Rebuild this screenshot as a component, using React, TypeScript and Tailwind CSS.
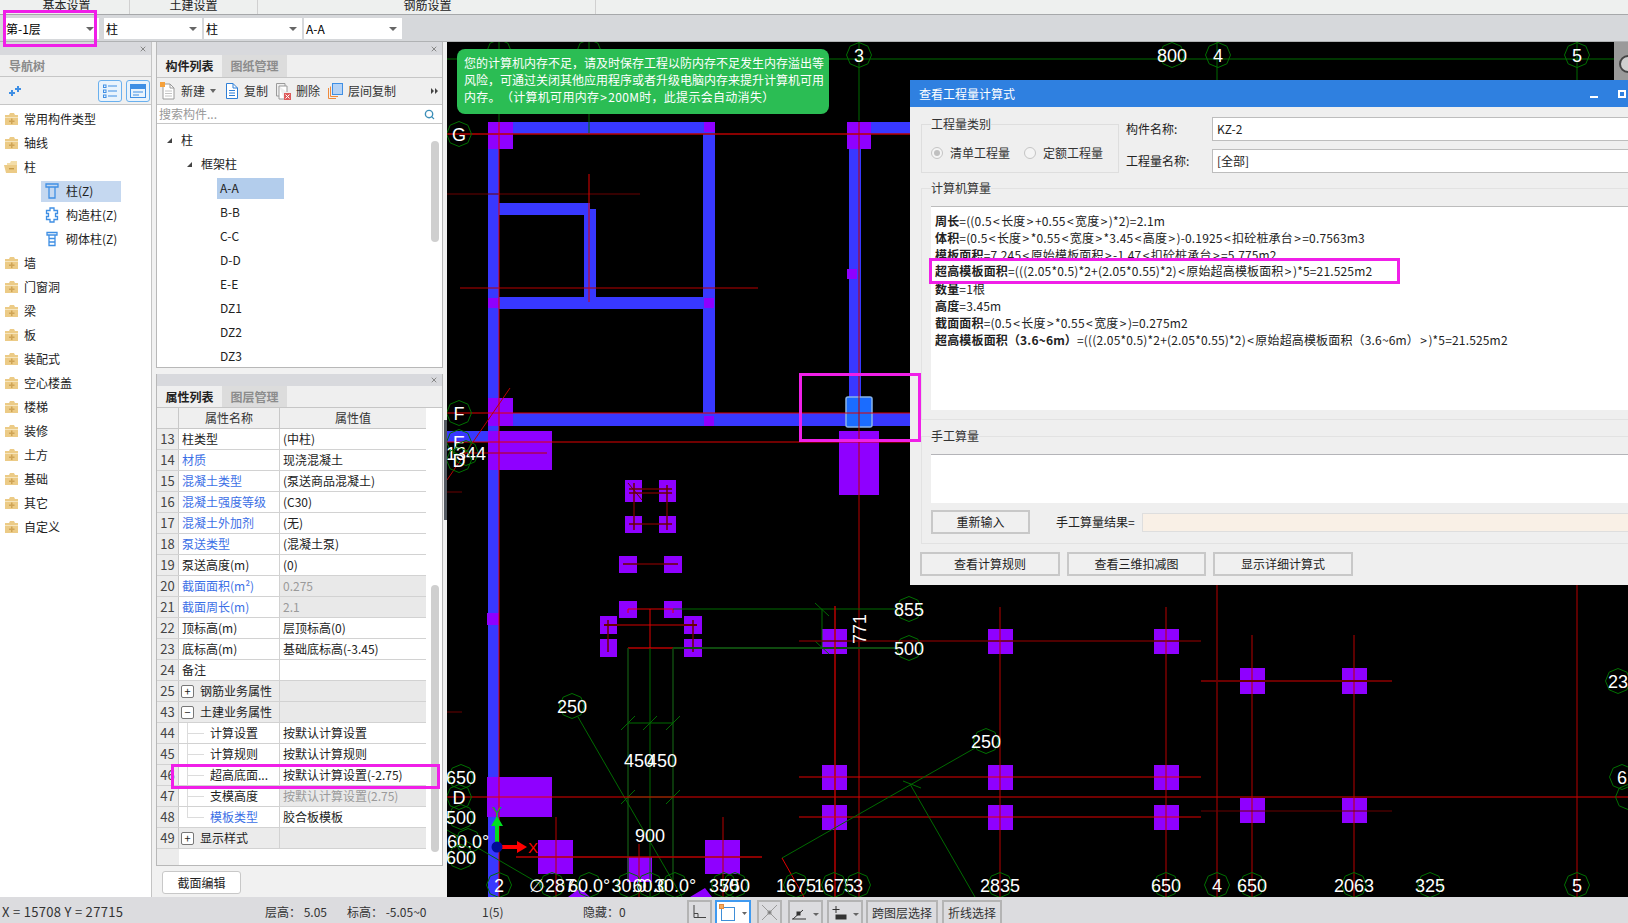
import React from "react";
import { Search, X as CloseIcon } from "lucide-react";

const MAGENTA = "border-[3px] border-[#f01fe8]";

// ---------- small icons ----------
const FolderIcon = ({ open }: { open?: boolean }) => (
  <svg width="15" height="14" viewBox="0 0 15 14" className="shrink-0">
    {open ? (
      <>
        <path d="M3 3 L6 3 L7 1 L13 1 L13 11 L3 11 Z" fill="#f3dda8" />
        <path d="M0 5 L13 5 L13 13 L2 13 Z" fill="#eccb86" />
        <rect x="5" y="8" width="5" height="1.4" fill="#c79a45" />
      </>
    ) : (
      <>
        <path d="M1 3 L5 3 L6 1 L10 1 L11 3 L14 3 L14 13 L1 13 Z" fill="#eccb86" />
        <path d="M1 5 L14 5 L14 6 L1 6 Z" fill="#f6e5bd" />
        <path d="M7 6.5 H8.5 V8.5 H10.5 V10 H8.5 V12 H7 V10 H5 V8.5 H7 Z" fill="#cfa455" />
      </>
    )}
  </svg>
);

const ColumnIcon = () => (
  <svg width="14" height="16" viewBox="0 0 14 16" fill="none" stroke="#3f8fe4" strokeWidth="1.3">
    <path d="M1 1 H13 V4 H1 Z M4 4 V15 H10 V4" />
  </svg>
);
const ConstructColIcon = () => (
  <svg width="14" height="16" viewBox="0 0 14 16" fill="none" stroke="#3f8fe4" strokeWidth="1.3">
    <path d="M5 1 H9 V3.5 H12.5 V6.5 H10.5 V9.5 H12.5 V12.5 H9 V15 H5 V12.5 H1.5 V9.5 H3.5 V6.5 H1.5 V3.5 H5 Z" />
  </svg>
);
const BrickColIcon = () => (
  <svg width="14" height="16" viewBox="0 0 14 16" fill="none" stroke="#3f8fe4" strokeWidth="1.3">
    <path d="M2 1.5 H12 V4 H2 Z M4 4 V14.5 H10 V4 M4 7.5 H10 M4 11 H10" />
  </svg>
);

const NewIcon = () => (
  <svg width="16" height="18" viewBox="0 0 16 18" fill="none">
    <path d="M3 2 H10 L14 6 V17 H3 Z" fill="#fff" stroke="#9a9a9a" />
    <path d="M10 2 V6 H14" stroke="#9a9a9a" />
    <path d="M5 9 H12 M5 11.5 H12 M5 14 H12" stroke="#c4c4c4" />
    <rect x="0" y="0" width="5" height="5" fill="#f5a13c" />
  </svg>
);
const CopyIcon = () => (
  <svg width="14" height="18" viewBox="0 0 14 18" fill="none" stroke="#2f7fd6">
    <path d="M1.5 1.5 H8 L12.5 6 V16.5 H1.5 Z" fill="#fff" />
    <path d="M8 1.5 V6 H12.5 M4 8.5 H10 M4 11 H10 M4 13.5 H10" />
  </svg>
);
const DeleteIcon = () => (
  <svg width="15" height="17" viewBox="0 0 15 17" fill="none">
    <path d="M0.5 0.5 H9 V3 M0.5 0.5 V13 H3" stroke="#9a9a9a" />
    <path d="M3 3 H11 V9 M3 3 V16 H8" stroke="#9a9a9a" fill="#fff" />
    <rect x="8" y="10" width="7" height="7" fill="#de5a5a" />
    <path d="M9.5 11.5 L13.5 15.5 M13.5 11.5 L9.5 15.5" stroke="#fff" />
  </svg>
);
const FloorCopyIcon = () => (
  <svg width="15" height="16" viewBox="0 0 15 16" fill="none">
    <path d="M0.5 5 V15.5 H8 M2.5 3.500 V13.500 H10" stroke="#ee8a3c" />
    <rect x="4.5" y="0.5" width="10" height="11" fill="#b6d3f5" stroke="#3f8fe4" />
  </svg>
);

// ---------- top ----------
const Select = ({ label, w }: { label: string; w: string }) => (
  <div className={`${w} h-[21px] bg-white flex items-center justify-between pl-[2px] pr-[5px] text-[12px]`}>
    <span>{label}</span>
    <span className="w-0 h-0 border-x-[4px] border-x-transparent border-t-[4px] border-t-[#666]" />
  </div>
);

const MenuBar = () => (
  <div className="h-[15px] bg-[#eef0ef] border-b border-[#a6a8aa] flex text-[12px] leading-[14px] text-[#222] overflow-hidden shrink-0">
    <div className="w-[130px] border-r border-[#d0d0d0] text-center pl-[4px] -mt-[2px]">基本设置</div>
    <div className="w-[128px] border-r border-[#d0d0d0] text-center -mt-[2px]">土建设置</div>
    <div className="w-[338px] border-r border-[#d0d0d0] text-center pl-[2px] -mt-[2px]">钢筋设置</div>
  </div>
);

const FloorBar = () => (
  <div className="h-[27px] bg-[#d6d8db] border-b border-[#b0b2b4] flex items-center pl-[4px] pt-[1px] gap-[2px] shrink-0 relative">
    <Select label="第-1层" w="w-[95px]" />
    <div className="w-[1px]" />
    <Select label="柱" w="w-[98px]" />
    <Select label="柱" w="w-[98px]" />
    <Select label="A-A" w="w-[98px]" />
    <div className={`absolute left-[3px] top-[-5px] w-[94px] h-[37px] ${MAGENTA}`} />
  </div>
);

const PanelBar = ({ h = "h-[12px]" }: { h?: string }) => (
  <div className={`${h} bg-[#d8d9dd] flex items-center justify-end pr-[4px] shrink-0`}>
    <CloseIcon size={8} strokeWidth={3} color="#888" />
  </div>
);

// ---------- navigation ----------
const navItems: { label: string; kind?: "open" | "child"; icon?: React.ReactNode; active?: boolean }[] = [
  { label: "常用构件类型" },
  { label: "轴线" },
  { label: "柱", kind: "open" },
  { label: "柱(Z)", kind: "child", icon: <ColumnIcon />, active: true },
  { label: "构造柱(Z)", kind: "child", icon: <ConstructColIcon /> },
  { label: "砌体柱(Z)", kind: "child", icon: <BrickColIcon /> },
  { label: "墙" },
  { label: "门窗洞" },
  { label: "梁" },
  { label: "板" },
  { label: "装配式" },
  { label: "空心楼盖" },
  { label: "楼梯" },
  { label: "装修" },
  { label: "土方" },
  { label: "基础" },
  { label: "其它" },
  { label: "自定义" },
];

const NavPanel = () => (
  <div className="w-[152px] shrink-0 bg-white border-r border-[#c4c4c4] flex flex-col">
    <PanelBar h="h-[13px]" />
    <div className="h-[22px] bg-[#efefef] border-b border-[#c6c6c6] flex items-center pl-[9px] text-[12px] text-[#8a8a8a] font-bold">
      导航树
    </div>
    <div className="h-[28px] bg-[#f0f0f0] border-b border-[#c6c6c6] flex items-center pl-[8px] pr-[1px]">
      <svg width="13" height="12" viewBox="0 0 13 12" fill="#3f8fe4">
        <path d="M3 5 H5 V7 H7 V9 H5 V11 H3 V9 H1 V7 H3 Z M9 1 H11 V3 H13 V5 H11 V7 H9 V5 H7 V3 H9 Z" />
      </svg>
      <div className="ml-auto flex gap-[4px]">
        <div className="w-[24px] h-[22px] rounded-[3px] border border-[#6ab0ee] bg-[#e9f3fc] flex items-center justify-center">
          <svg width="14" height="14" viewBox="0 0 14 14" fill="none" stroke="#3f8fe4">
            <rect x="0.5" y="1" width="2.5" height="2.5" />
            <rect x="0.5" y="6" width="2.5" height="2.5" />
            <rect x="0.5" y="11" width="2.5" height="2.5" />
            <path d="M5 2 H14 M5 7 H14 M5 12 H14" />
          </svg>
        </div>
        <div className="w-[24px] h-[22px] rounded-[3px] border border-[#6ab0ee] bg-[#e9f3fc] flex items-center justify-center">
          <svg width="16" height="14" viewBox="0 0 16 14" fill="none" stroke="#3f8fe4">
            <rect x="0.5" y="0.5" width="15" height="13" />
            <rect x="0.5" y="0.5" width="15" height="4" fill="#3f8fe4" />
            <path d="M3 8 H13 M3 11 H9" />
          </svg>
        </div>
      </div>
    </div>
    <div className="pt-[2px]">
      {navItems.map((item, i) => (
        <div key={i} className="h-[24px] flex items-center text-[12px] text-[#222]">
          {item.kind === "child" ? (
            <div className={`ml-[41px] h-[21px] w-[80px] flex items-center pl-[4px] gap-[7px] ${item.active ? "bg-[#c5d8f0]" : ""}`}>
              {item.icon}
              <span className="whitespace-nowrap">{item.label}</span>
            </div>
          ) : (
            <div className="flex items-center pl-[4px] gap-[5px]">
              <FolderIcon open={item.kind === "open"} />
              <span>{item.label}</span>
            </div>
          )}
        </div>
      ))}
    </div>
  </div>
);

// ---------- component list ----------
const Tabs = ({ active, other, h = "h-[22px]" }: { active: string; other: string; h?: string }) => (
  <div className={`${h} bg-[#efefef] border-b border-[#c6c6c6] flex text-[12px] shrink-0`}>
    <div className="w-[65px] flex items-center justify-center font-bold text-[#222]">{active}</div>
    <div className="w-[65px] bg-[#dcdcdc] flex items-center justify-center font-bold text-[#8c8c8c]">{other}</div>
  </div>
);

const ToolBtn = ({ icon, label, w }: { icon: React.ReactNode; label: string; w: string }) => (
  <div className={`${w} flex items-center gap-[5px]`}>
    {icon}
    <span className="text-[12px] text-[#333] whitespace-nowrap">{label}</span>
  </div>
);

const listItems = ["A-A", "B-B", "C-C", "D-D", "E-E", "DZ1", "DZ2", "DZ3"];

const ComponentList = () => (
  <div className="h-[326px] bg-white border border-[#b8b8b8] border-t-0 flex flex-col">
    <PanelBar h="h-[13px]" />
    <Tabs active="构件列表" other="图纸管理" h="h-[23px]" />
    <div className="h-[27px] bg-[#efefef] border-b border-[#c6c6c6] flex items-center pl-[3px] pr-[4px] shrink-0">
      <ToolBtn icon={<NewIcon />} label="新建" w="w-[50px]" />
      <span className="w-0 h-0 border-x-[3px] border-x-transparent border-t-[4px] border-t-[#666] mr-[9px]" />
      <ToolBtn icon={<CopyIcon />} label="复制" w="w-[51px]" />
      <ToolBtn icon={<DeleteIcon />} label="删除" w="w-[52px]" />
      <ToolBtn icon={<FloorCopyIcon />} label="层间复制" w="w-[70px]" />
      <svg width="7" height="6" viewBox="0 0 7 6" fill="#444" className="ml-auto">
        <path d="M0 0 L3 3 L0 6 Z M4 0 L7 3 L4 6 Z" />
      </svg>
    </div>
    <div className="h-[19px] border-b border-[#c6c6c6] flex items-center justify-between pl-[2px] pr-[7px] text-[12px] text-[#999] shrink-0">
      <span>搜索构件...</span>
      <Search size={11} strokeWidth={3} color="#3d8fb8" />
    </div>
    <div className="flex-1 relative pt-[4px] text-[12px] text-[#222]">
      <div className="h-[24px] flex items-center pl-[10px] gap-[6px]">
        <span className="w-0 h-0 border-l-[5px] border-l-transparent border-b-[5px] border-b-[#444]" />
        <span className="ml-[3px]">柱</span>
      </div>
      <div className="h-[24px] flex items-center pl-[30px] gap-[6px]">
        <span className="w-0 h-0 border-l-[5px] border-l-transparent border-b-[5px] border-b-[#444]" />
        <span className="ml-[3px]">框架柱</span>
      </div>
      {listItems.map((name, i) => (
        <div key={name} className="h-[24px] flex items-center pl-[60px]">
          <div className={`w-[67px] h-[21px] flex items-center pl-[3px] ${i === 0 ? "bg-[#b3cdec]" : ""}`}>{name}</div>
        </div>
      ))}
      <div className="absolute right-[3px] top-[17px] w-[8px] h-[101px] rounded-[4px] bg-[#cfcfcf]" />
    </div>
  </div>
);

// ---------- property list ----------
type Prop = {
  no: number;
  name: string;
  value?: string;
  blue?: boolean;
  grayValue?: boolean;
  grayRow?: boolean;
  toggle?: "+" | "-";
  child?: boolean;
  last?: boolean;
};

const props: Prop[] = [
  { no: 13, name: "柱类型", value: "(中柱)" },
  { no: 14, name: "材质", value: "现浇混凝土", blue: true },
  { no: 15, name: "混凝土类型", value: "(泵送商品混凝土)", blue: true },
  { no: 16, name: "混凝土强度等级", value: "(C30)", blue: true },
  { no: 17, name: "混凝土外加剂", value: "(无)", blue: true },
  { no: 18, name: "泵送类型", value: "(混凝土泵)", blue: true },
  { no: 19, name: "泵送高度(m)", value: "(0)" },
  { no: 20, name: "截面面积(m²)", value: "0.275", blue: true, grayValue: true },
  { no: 21, name: "截面周长(m)", value: "2.1", blue: true, grayValue: true },
  { no: 22, name: "顶标高(m)", value: "层顶标高(0)" },
  { no: 23, name: "底标高(m)", value: "基础底标高(-3.45)" },
  { no: 24, name: "备注" },
  { no: 25, name: "钢筋业务属性", toggle: "+", grayRow: true },
  { no: 43, name: "土建业务属性", toggle: "-", grayRow: true },
  { no: 44, name: "计算设置", value: "按默认计算设置", child: true },
  { no: 45, name: "计算规则", value: "按默认计算规则", child: true },
  { no: 46, name: "超高底面...", value: "按默认计算设置(-2.75)", child: true },
  { no: 47, name: "支模高度", value: "按默认计算设置(2.75)", child: true, grayValue: true },
  { no: 48, name: "模板类型", value: "胶合板模板", child: true, blue: true, last: true },
  { no: 49, name: "显示样式", toggle: "+", grayRow: true },
];

const PropRow = ({ p }: { p: Prop }) => (
  <div className="h-[21px] flex text-[12px] border-b border-[#d2d2d2]">
    <div className="w-[22px] shrink-0 bg-[#ececec] border-r border-[#c8c8c8] flex items-center justify-center text-[13px] text-[#444]">
      {p.no}
    </div>
    <div
      className={`w-[101px] shrink-0 border-r border-[#d2d2d2] flex items-center relative ${p.grayRow ? "bg-[#ebebeb]" : ""} ${p.blue ? "text-[#3c6fe6]" : "text-[#222]"} ${p.child ? "pl-[31px]" : "pl-[3px]"}`}
    >
      {p.toggle && (
        <span className="w-[13px] h-[13px] mr-[6px] -ml-[1px] rounded-[2px] border border-[#777] bg-white flex items-center justify-center text-[11px] leading-none">
          {p.toggle === "+" ? "+" : "−"}
        </span>
      )}
      {p.child && (
        <>
          <span className={`absolute left-[8px] top-0 border-l border-[#dcdcdc] ${p.last ? "h-[10px]" : "h-full"}`} />
          <span className="absolute left-[8px] top-[10px] w-[17px] border-t border-[#dcdcdc]" />
        </>
      )}
      <span className="whitespace-nowrap">{p.name}</span>
    </div>
    <div
      className={`flex-1 flex items-center pl-[3px] whitespace-nowrap ${p.grayValue || p.grayRow ? "bg-[#e9e9e9]" : ""} ${p.grayValue ? "text-[#9a9a9a]" : "text-[#222]"}`}
    >
      {p.value}
    </div>
  </div>
);

const PropertyList = () => (
  <div className="h-[492px] mt-[6px] bg-white border border-[#b8b8b8] border-t-0 flex flex-col">
    <PanelBar />
    <Tabs active="属性列表" other="图层管理" />
    <div className="flex-1 flex relative">
      <div className="w-[269px] flex flex-col">
        <div className="h-[21px] flex text-[12px] text-[#333] bg-[#efefef] border-b border-[#c8c8c8]">
          <div className="w-[22px] border-r border-[#c8c8c8]" />
          <div className="w-[101px] border-r border-[#c8c8c8] flex items-center justify-center">属性名称</div>
          <div className="flex-1 flex items-center justify-center">属性值</div>
        </div>
        {props.map((p) => (
          <PropRow key={p.no} p={p} />
        ))}
        <div className="flex-1 w-[22px] bg-[#ececec]" />
      </div>
      <div className="absolute right-[3px] top-[177px] w-[8px] h-[267px] rounded-[4px] bg-[#cfcfcf]" />
      <div className={`absolute left-[14px] top-[356px] w-[269px] h-[25px] ${MAGENTA}`} />
    </div>
  </div>
);

const MiddleColumn = () => (
  <div className="w-[295px] shrink-0 bg-[#f1f1f1] px-[4px] flex flex-col relative">
    <ComponentList />
    <PropertyList />
    <div className="mt-[5px] ml-[6px] w-[79px] h-[23px] rounded-[3px] border border-[#c8c8c8] bg-white flex items-center justify-center text-[12px] text-[#222]">
      截面编辑
    </div>
    <div className="absolute right-0 top-[378px] w-[3px] h-[100px] bg-[#555b63]" />
  </div>
);

// ---------- drawing ----------
const R = "#e00000";
const MID = "#b80000";
const DIM = "#6a0000";
const G = "#006b00";
const DG = "#0f4a0f";

// x1 y1 x2 y2 colour width
const lines: [number, number, number, number, string, number?][] = [
  [447, 59, 1628, 59, G],
  [499, 42, 499, 122, G],
  [589, 42, 589, 133, G],
  [859, 42, 859, 121, G],
  [1217, 42, 1217, 121, G],
  [1577, 42, 1577, 121, G],
  [447, 134, 910, 134, MID, 1.5],
  [447, 194, 640, 194, DIM],
  [460, 288, 758, 288, MID],
  [447, 413, 910, 413, R],
  [447, 442, 910, 442, R],
  [460, 453, 547, 453, MID],
  [447, 492, 462, 492, DIM],
  [447, 712, 462, 712, DIM],
  [499, 122, 499, 897, R],
  [589, 174, 589, 302, R],
  [859, 122, 859, 897, MID],
  [510, 388, 447, 480, MID],
  [634, 483, 634, 530, DIM, 1.5],
  [667, 485, 667, 530, DIM, 1.5],
  [629, 489, 672, 489, DIM, 1.5],
  [629, 493, 672, 493, DIM, 1.5],
  [629, 524, 672, 524, DIM, 1.5],
  [628, 483, 642, 500, DIM],
  [623, 564, 678, 564, DIM, 1.5],
  [604, 625, 697, 625, DIM, 2],
  [608, 620, 608, 652, DIM, 1.5],
  [693, 620, 693, 652, DIM, 1.5],
  [628, 609, 673, 609, R],
  [628, 609, 628, 613, R],
  [673, 609, 673, 613, R],
  [673, 609, 895, 609, G],
  [628, 648, 673, 648, MID, 1.5],
  [673, 648, 895, 648, DG, 2],
  [650, 609, 650, 648, R],
  [650, 648, 650, 897, G],
  [628, 648, 628, 880, DG, 1.5],
  [673, 648, 673, 880, DG, 1.5],
  [628, 723, 673, 723, G],
  [621, 730, 635, 716, G],
  [643, 730, 657, 716, G],
  [666, 730, 680, 716, G],
  [628, 797, 673, 797, G],
  [621, 804, 635, 790, G],
  [666, 804, 680, 790, G],
  [578, 717, 682, 897, G],
  [447, 830, 545, 887, G],
  [447, 797, 1628, 797, R],
  [556, 817, 556, 897, MID],
  [723, 817, 723, 897, MID],
  [516, 857, 762, 857, MID, 1.5],
  [639, 844, 639, 897, MID],
  [822, 609, 822, 648, G],
  [815, 603, 829, 616, G],
  [815, 641, 829, 654, G],
  [835, 606, 835, 897, MID, 1.5],
  [799, 641, 1201, 641, DIM, 1.5],
  [799, 777, 1201, 777, R],
  [799, 817, 1201, 817, R],
  [1000, 607, 1000, 897, MID],
  [1166, 607, 1166, 897, MID],
  [1217, 585, 1217, 897, MID],
  [1577, 585, 1577, 897, MID],
  [1252, 635, 1252, 897, MID],
  [1354, 635, 1354, 897, MID],
  [1201, 681, 1392, 681, DIM, 2],
  [1201, 811, 1392, 811, DIM],
  [782, 858, 975, 748, G],
  [910, 784, 975, 897, G],
  [903, 781, 921, 788, G],
  [782, 858, 804, 897, R],
];

const walls: [number, number, number, number][] = [
  [488, 122, 227, 12],
  [847, 122, 63, 12],
  [488, 122, 11, 775],
  [703, 122, 12, 295],
  [849, 122, 12, 295],
  [499, 203, 91, 12],
  [584, 209, 12, 90],
  [499, 297, 216, 12],
  [488, 413, 422, 13],
  [447, 431, 41, 11],
];

const purple: [number, number, number, number][] = [
  [488, 122, 25, 27],
  [704, 122, 11, 10],
  [847, 122, 24, 27],
  [847, 269, 10, 10],
  [488, 298, 11, 10],
  [704, 298, 10, 10],
  [488, 398, 25, 28],
  [704, 416, 10, 10],
  [488, 431, 64, 39],
  [839, 431, 40, 64],
  [625, 480, 17, 22],
  [659, 480, 17, 22],
  [625, 516, 17, 17],
  [659, 516, 17, 17],
  [619, 556, 18, 17],
  [664, 556, 18, 17],
  [619, 601, 18, 17],
  [664, 601, 18, 17],
  [600, 616, 17, 18],
  [684, 616, 18, 18],
  [600, 639, 17, 18],
  [684, 639, 18, 18],
  [487, 613, 12, 12],
  [487, 777, 65, 40],
  [538, 840, 35, 34],
  [705, 840, 35, 34],
  [627, 857, 25, 25],
  [822, 629, 25, 25],
  [988, 629, 25, 25],
  [1154, 629, 25, 25],
  [822, 765, 25, 25],
  [988, 765, 25, 25],
  [1154, 765, 25, 25],
  [822, 805, 25, 25],
  [988, 805, 25, 25],
  [1154, 805, 25, 25],
  [1240, 668, 25, 26],
  [1342, 668, 25, 26],
  [1240, 798, 25, 25],
  [1342, 798, 25, 25],
];

// label text, centre x, centre y, ring around it
const labels: [string, number, number, boolean][] = [
  ["", 499, 52, true],
  ["", 589, 52, true],
  ["3", 859, 55, true],
  ["800", 1172, 55, true],
  ["4", 1218, 55, true],
  ["5", 1577, 55, true],
  ["G", 459, 134, true],
  ["F", 459, 413, true],
  ["E", 459, 442, true],
  ["1344", 466, 453, true],
  ["D", 459, 460, true],
  ["855", 909, 609, true],
  ["500", 909, 648, true],
  ["250", 572, 706, true],
  ["450", 639, 760, false],
  ["450", 662, 760, false],
  ["900", 650, 835, false],
  ["250", 986, 741, true],
  ["650", 461, 777, true],
  ["D", 459, 797, true],
  ["500", 461, 817, true],
  ["60.0°", 468, 841, true],
  ["600", 461, 857, true],
  ["2", 499, 885, true],
  ["∅287", 552, 885, true],
  ["60.0°", 589, 885, true],
  ["30.0", 629, 885, true],
  ["60.0", 650, 885, true],
  ["30.0°", 675, 885, true],
  ["350", 724, 885, true],
  ["750", 735, 885, true],
  ["1675", 796, 885, true],
  ["1675", 834, 885, true],
  ["3", 858, 885, true],
  ["2835", 1000, 885, true],
  ["650", 1166, 885, true],
  ["4", 1217, 885, true],
  ["650", 1252, 885, true],
  ["2063", 1354, 885, true],
  ["325", 1430, 885, true],
  ["5", 1577, 885, true],
  ["23", 1618, 681, true],
  ["6", 1622, 777, true],
  ["", 1628, 797, true],
];

const ring = (cx: number, cy: number) =>
  Array.from({ length: 8 }, (_, i) => {
    const a = (Math.PI / 4) * i - Math.PI / 2;
    return `${cx + 12.5 * Math.cos(a)},${cy + 12.5 * Math.sin(a)}`;
  }).join(" ");

const Drawing = () => (
  <svg viewBox="447 42 1181 855" className="w-full h-full block font-['Liberation_Sans',sans-serif]">
    {walls.map(([x, y, w, h], i) => (
      <rect key={i} x={x} y={y} width={w} height={h} fill="#3838ff" />
    ))}
    {purple.map(([x, y, w, h], i) => (
      <rect key={i} x={x} y={y} width={w} height={h} fill="#8f00ff" />
    ))}
    <path d="M568 897 L580 888 L590 897 Z M690 897 L705 888 L712 897 Z" fill="#8f00ff" />
    <rect x="846" y="397" width="26" height="30" rx="2" fill="#1a6cff" stroke="#8ab4e8" strokeWidth="1.5" />
    {lines.map(([x1, y1, x2, y2, c, w], i) => (
      <line key={i} x1={x1} y1={y1} x2={x2} y2={y2} stroke={c} strokeWidth={w ?? 1} />
    ))}
    {labels.map(([t, x, y, hasRing], i) => (
      <g key={i}>
        {hasRing && <polygon points={ring(x, y)} fill="none" stroke="#007000" />}
        {t && (
          <text x={x} y={y + 6.5} textAnchor="middle" fontSize="18" fill="#fff">
            {t}
          </text>
        )}
      </g>
    ))}
    <text x="859" y="622" textAnchor="middle" fontSize="18" fill="#fff" transform="rotate(-90 866 622)">
      771
    </text>
    {/* view cube corner, cut by the window edge */}
    <path d="M1628 42 V80 H1614 V42 Z" fill="#9a9a9a" />
    <circle cx="1628" cy="64" r="8" fill="#cfcfcf" stroke="#444" strokeWidth="2" />
    {/* axis marker */}
    <path d="M495 846 V826 H491 L497 816 L503 826 H499 V846 Z" fill="#00e020" />
    <path d="M500 845 H517 V841 L527 847 L517 853 V849 H500 Z" fill="#ff0000" />
    <circle cx="497" cy="847" r="5.5" fill="#000a96" />
    <text x="497" y="817" textAnchor="middle" fontSize="15" fill="#00b020">Y</text>
    <text x="533" y="853" textAnchor="middle" fontSize="15" fill="#ff0000">X</text>
  </svg>
);

// ---------- dialog ----------
const formulas: [string, string][] = [
  ["周长", "=((0.5<长度>+0.55<宽度>)*2)=2.1m"],
  ["体积", "=(0.5<长度>*0.55<宽度>*3.45<高度>)-0.1925<扣砼桩承台>=0.7563m3"],
  ["模板面积", "=7.245<原始模板面积>-1.47<扣砼桩承台>=5.775m2"],
  ["超高模板面积", "=(((2.05*0.5)*2+(2.05*0.55)*2)<原始超高模板面积>)*5=21.525m2"],
  ["数量", "=1根"],
  ["高度", "=3.45m"],
  ["截面面积", "=(0.5<长度>*0.55<宽度>)=0.275m2"],
  ["超高模板面积（3.6~6m）", "=(((2.05*0.5)*2+(2.05*0.55)*2)<原始超高模板面积（3.6~6m）>)*5=21.525m2"],
];

// the angle brackets sit wider in the original font
const Formula = ({ text }: { text: string }) => (
  <>
    {text.split(/([<>])/).map((part, i) =>
      part === "<" || part === ">" ? (
        <span key={i} className="px-[1.3px]">
          {part}
        </span>
      ) : (
        part
      )
    )}
  </>
);

const Radio = ({ checked, label }: { checked?: boolean; label: string }) => (
  <div className="flex items-center gap-[7px]">
    <span className="w-[12px] h-[12px] rounded-full border border-[#c4c4c4] bg-[#f4f4f4] flex items-center justify-center">
      {checked && <span className="w-[6px] h-[6px] rounded-full bg-[#c0c0c0]" />}
    </span>
    <span className="text-[#333]">{label}</span>
  </div>
);

const DlgButton = ({ label, w }: { label: string; w: string }) => (
  <div className={`${w} h-[24px] border-2 border-[#c8c8c8] bg-[#f0f0f0] flex items-center justify-center text-[12px] text-[#222]`}>
    {label}
  </div>
);

const Dialog = () => (
  <div className="absolute left-[910px] top-[80px] w-[760px] h-[505px] bg-[#efefef] text-[12px] text-[#222] flex flex-col">
    <div className="h-[27px] bg-[#2f80e0] text-white flex items-center shrink-0">
      <div className="w-[718px] flex items-center justify-between pl-[9px] pr-[2px]">
        <span>查看工程量计算式</span>
        <div className="flex items-center gap-[20px]">
          <span className="w-[8px] h-[2px] bg-white mt-[6px]" />
          <span className="w-[8px] h-[8px] border-2 border-white" />
        </div>
      </div>
    </div>
    <div className="px-[11px] pt-[10px]">
      <div className="flex h-[56px]">
        <fieldset className="w-[198px] h-[56px] border border-[#dedede] pl-[9px]">
          <legend className="leading-[14px] text-[#333]">工程量类别</legend>
          <div className="flex items-center gap-[14px] pt-[13px]">
            <Radio checked label="清单工程量" />
            <Radio label="定额工程量" />
          </div>
        </fieldset>
        <div className="flex-1 ml-[7px] flex flex-col gap-[8px]">
          <div className="flex items-center h-[24px]">
            <span className="w-[86px]">构件名称:</span>
            <div className="flex-1 h-[24px] bg-white border border-[#bdbdbd] flex items-center pl-[4px]">KZ-2</div>
          </div>
          <div className="flex items-center h-[24px]">
            <span className="w-[86px]">工程量名称:</span>
            <div className="flex-1 h-[24px] bg-white border border-[#bdbdbd] flex items-center pl-[4px]">[全部]</div>
          </div>
        </div>
      </div>
      <fieldset className="relative mt-[8px] h-[239px] border border-[#e2e2e2] pl-[9px]">
        <legend className="leading-[14px] text-[#333]">计算机算量</legend>
        <div className="h-[204px] mt-[11px] bg-white border-t border-[#bcbcbc] pl-[4px] pt-[5px]">
          {formulas.map(([name, rest], i) => (
            <div key={i} className="h-[17px] leading-[17px] whitespace-nowrap tracking-[0.16px]">
              <b>{name}</b>
              <Formula text={rest} />
            </div>
          ))}
        </div>
      </fieldset>
      <fieldset className="mt-[9px] h-[115px] border border-[#e2e2e2] pl-[9px]">
        <legend className="leading-[14px] text-[#333]">手工算量</legend>
        <div className="h-[49px] mt-[11px] bg-white border-t border-[#b4b4b8]" />
        <div className="mt-[7px] flex items-center">
          <DlgButton label="重新输入" w="w-[99px]" />
          <span className="ml-[26px] w-[86px]">手工算量结果=</span>
          <div className="flex-1 h-[19px] bg-[#f9f0e6] border border-[#dedede]" />
        </div>
      </fieldset>
      <div className="mt-[8px] flex gap-[7px] -ml-[1px]">
        <DlgButton label="查看计算规则" w="w-[140px]" />
        <DlgButton label="查看三维扣减图" w="w-[139px]" />
        <DlgButton label="显示详细计算式" w="w-[140px]" />
      </div>
    </div>
  </div>
);

// ---------- status bar ----------
const StatusBtn = ({ w, children, active }: { w: string; children: React.ReactNode; active?: boolean }) => (
  <div
    className={`${w} h-[23px] border-2 border-b-0 flex items-center justify-center text-[12px] text-[#333] ${active ? "border-[#3f9af0] bg-white" : "border-[#b4b4b4] bg-[#dcdcdf]"}`}
  >
    {children}
  </div>
);

const StatusBar = () => (
  <div className="h-[26px] bg-[#dcdcdf] flex items-end text-[12px] text-[#333] shrink-0">
    <div className="h-full flex items-center pt-[4px]">
      <span className="w-[265px] pl-[2px] text-[13px] tracking-[0.3px]">X = 15708 Y = 27715</span>
      <span className="w-[82px]">层高： 5.05</span>
      <span className="w-[135px]">标高： -5.05~0</span>
      <span className="w-[101px]">1(5)</span>
      <span className="w-[104px]">隐藏：0</span>
    </div>
    <div className="flex gap-[3px]">
      <StatusBtn w="w-[25px]">
        <svg width="15" height="15" viewBox="0 0 15 15" fill="none" stroke="#444">
          <path d="M2 0 V12.5 H14 M2 8.5 H6 V12.5" />
        </svg>
      </StatusBtn>
      <StatusBtn w="w-[36px] mr-[3px]" active>
        <svg width="28" height="17" viewBox="0 0 28 17" fill="none">
          <rect x="2.5" y="3.5" width="13" height="13" stroke="#3f8fd8" />
          <rect x="0.5" y="0.5" width="4" height="4" fill="#f5a95c" stroke="#e08a3c" />
          <path d="M23 8 H28 L25.5 11 Z" fill="#666" />
        </svg>
      </StatusBtn>
      <StatusBtn w="w-[25px] mr-[3px]">
        <svg width="17" height="17" viewBox="0 0 17 17" fill="none" stroke="#9a9a9a">
          <path d="M1 1 L16 16 M16 1 L1 16" />
          <rect x="7" y="7" width="3" height="3" fill="#777" />
        </svg>
      </StatusBtn>
      <StatusBtn w="w-[35px] mr-[1px]">
        <svg width="29" height="16" viewBox="0 0 29 16" fill="none" stroke="#333">
          <path d="M1 14 H15 M2 14 L12 5" />
          <rect x="6" y="7" width="3" height="3" fill="#333" />
          <path d="M22 8 H28 L25 11 Z" fill="#666" stroke="none" />
        </svg>
      </StatusBtn>
      <StatusBtn w="w-[36px]">
        <svg width="29" height="16" viewBox="0 0 29 16" fill="none" stroke="#333">
          <path d="M5 1 V8 M1.5 4.5 H8.5" />
          <rect x="5" y="10" width="10" height="4" fill="#333" />
          <path d="M22 8 H28 L25 11 Z" fill="#666" stroke="none" />
        </svg>
      </StatusBtn>
      <StatusBtn w="w-[72px]">跨图层选择</StatusBtn>
      <StatusBtn w="w-[60px] ml-[1px]">折线选择</StatusBtn>
    </div>
  </div>
);

export default function App() {
  return (
    <div className="relative w-[1628px] h-[923px] overflow-hidden bg-white flex flex-col font-['Noto_Sans_CJK_SC','Liberation_Sans',sans-serif]">
      <MenuBar />
      <FloorBar />
      <div className="flex-1 min-h-0 flex">
        <NavPanel />
        <MiddleColumn />
        <div className="flex-1 min-w-0 bg-black relative">
          <Drawing />
          <div className="absolute left-[10px] top-[7px] w-[372px] h-[65px] rounded-[8px] bg-[#2bbd54] text-white text-[12px] leading-[17px] pl-[7px] pt-[5px] [text-spacing-trim:space-all]">
            您的计算机内存不足，请及时保存工程以防内存不足发生内存溢出等
            <br />
            风险，可通过关闭其他应用程序或者升级电脑内存来提升计算机可用
            <br />
            <span className="tracking-[0.3px]">
              内存。（计算机可用内存<span className="px-[1px]">&gt;</span>200M时，此提示会自动消失）
            </span>
          </div>
        </div>
      </div>
      <StatusBar />
      <Dialog />
      <div className={`absolute left-[929px] top-[258px] w-[471px] h-[26px] bg-white ${MAGENTA} text-[12px] leading-[20px] text-[#222] pl-[3px] whitespace-nowrap tracking-[0.16px]`}>
        <b>超高模板面积</b>
        <Formula text="=(((2.05*0.5)*2+(2.05*0.55)*2)<原始超高模板面积>)*5=21.525m2" />
      </div>
      <div className={`absolute left-[799px] top-[373px] w-[122px] h-[69px] ${MAGENTA}`} />
    </div>
  );
}
